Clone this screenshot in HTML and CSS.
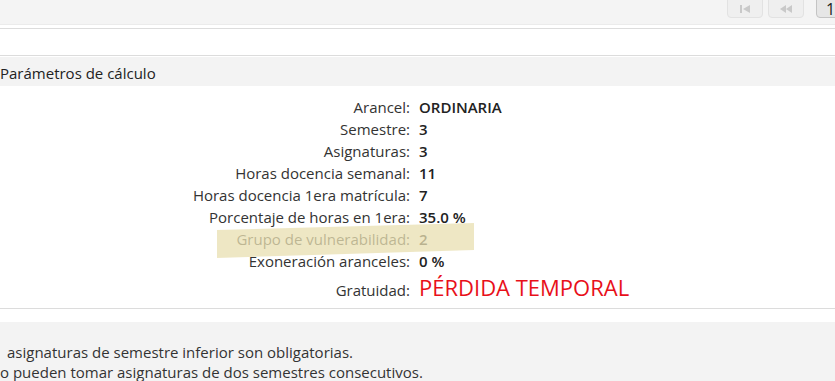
FILE: index.html
```html
<!DOCTYPE html>
<html>
<head>
	<meta charset="UTF-8">
	<title>Parámetros de cálculo</title>
	<link rel="stylesheet" href="styles.css">
</head>
<body>
	<div class="toolbar">
		<div class="pager">
			<span class="pg-btn">
				<svg width="14" height="10" viewBox="0 0 14 10"><rect x="2" y="1" width="2" height="8" fill="#c9c9c9"/><path d="M12 1 L5 5 L12 9 Z" fill="#c9c9c9"/></svg>
			</span>
			<span class="pg-btn">
				<svg width="16" height="10" viewBox="0 0 16 10"><path d="M8 1 L2 5 L8 9 Z M14 1 L8 5 L14 9 Z" fill="#c9c9c9"/></svg>
			</span>
			<span class="pg-btn pg-current"><span>1</span></span>
		</div>
	</div>
	<div class="spacer"></div>
	<div class="section">
		<div class="section-title">Parámetros de cálculo</div>
		<div class="params">
			<div class="row"><span class="label">Arancel:</span><span class="value">ORDINARIA</span></div>
			<div class="row"><span class="label">Semestre:</span><span class="value">3</span></div>
			<div class="row"><span class="label">Asignaturas:</span><span class="value">3</span></div>
			<div class="row"><span class="label">Horas docencia semanal:</span><span class="value">11</span></div>
			<div class="row"><span class="label">Horas docencia 1era matrícula:</span><span class="value">7</span></div>
			<div class="row"><span class="label">Porcentaje de horas en 1era:</span><span class="value">35.0 %</span></div>
			<div class="row row-marked"><span class="label">Grupo de vulnerabilidad:</span><span class="value">2</span></div>
			<div class="row"><span class="label">Exoneración aranceles:</span><span class="value">0 %</span></div>
			<div class="row row-big"><span class="label">Gratuidad:</span><span class="value alert">PÉRDIDA TEMPORAL</span></div>
		</div>
	</div>
	<div class="notes">
		<p class="note-1">asignaturas de semestre inferior son obligatorias.</p>
		<p>o pueden tomar asignaturas de dos semestres consecutivos.</p>
	</div>
</body>
</html>
```

FILE: styles.css
```css
html {
    background-color: #fff;
}
body {
    margin: 0;
    padding: 0;
    font-family: "Open Sans", "Noto Sans", sans-serif;
    color: #333;
    overflow: hidden;
}
.toolbar {
    height: 24px;
    background: #f4f4f4;
    border-bottom: 1px solid #ebebeb;
    overflow: hidden;
    display: flex;
    justify-content: flex-end;
    align-items: flex-end;
}
.pager {
    display: flex;
    align-items: flex-end;
    padding-bottom: 6px;
    margin-right: -17px;
}
.pg-btn {
    box-sizing: border-box;
    width: 36px;
    height: 30px;
    margin-left: 5px;
    border: 1px solid #e2e2e2;
    border-radius: 0 0 4px 4px;
    background: #efefef;
    display: flex;
    align-items: center;
    justify-content: center;
    padding-top: 12px;
}
.pg-current {
    margin-left: 12px;
    border-color: #c4c4c4;
    background: #e6e6e6;
    color: #222;
    font-size: 16px;
    justify-content: flex-start;
    padding-left: 9px;
}
.spacer {
    height: 3px;
    border-bottom: 1px solid #dcdcdc;
}
.section {
    margin-top: 26px;
    border-top: 1px solid #dcdcdc;
    border-bottom: 1px solid #dcdcdc;
    padding-top: 1px;
    padding-bottom: 6px;
}
.section-title {
    background: #f3f3f3;
    height: 29px;
    line-height: 33px;
    font-size: 15px;
    color: #222;
}
.params {
    padding-top: 10px;
}
.row {
    display: flex;
    align-items: baseline;
    height: 22px;
    line-height: 22px;
    font-size: 15px;
    position: relative;
}
.label {
    width: 410px;
    text-align: right;
    color: #333;
}
.value {
    margin-left: 9px;
    font-weight: 600;
    color: #222;
}
/* marcador amarillo encima de la fila */
.row-marked::after {
    content: "";
    position: absolute;
    left: 217px;
    top: -5px;
    width: 257px;
    height: 35px;
    background: rgba(232, 224, 178, 0.76);
    clip-path: polygon(0 7px, 100% 0, 100% 27px, 0 35px);
    z-index: 1;
}
.row-big {
    height: 30px;
    line-height: 30px;
}
.alert {
    font-size: 22px;
    font-weight: normal;
    color: #e8101a;
}
.notes {
    margin-top: 13px;
    background: #f3f3f3;
    padding-top: 20px;
    height: 80px;
    font-size: 15px;
    color: #333;
}
.notes p {
    margin: 0;
    line-height: 20px;
}
.note-1 {
    padding-left: 7px;
}
```
